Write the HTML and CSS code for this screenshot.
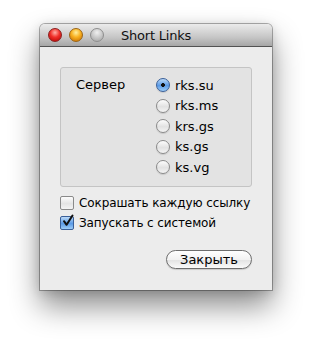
FILE: index.html
```html
<!DOCTYPE html>
<html lang="ru">

<head>
    <meta charset="UTF-8">
    <title>Short Links</title>
    <link rel="stylesheet" href="styles.css">
</head>

<body>
    <div class="window">
        <div class="titlebar">
            <div class="lights">
                <span class="light red"></span>
                <span class="light orange"></span>
                <span class="light gray"></span>
            </div>
            <div class="title">Short Links</div>
            <div></div>
        </div>

        <div class="content">
            <div class="group">
                <div class="label">Сервер</div>
                <div class="radios">
                    <div class="row"><span class="radio checked"></span>rks.su</div>
                    <div class="row"><span class="radio"></span>rks.ms</div>
                    <div class="row"><span class="radio"></span>krs.gs</div>
                    <div class="row"><span class="radio"></span>ks.gs</div>
                    <div class="row"><span class="radio"></span>ks.vg</div>
                </div>
            </div>

            <div class="checks">
                <div class="row"><span class="check"></span><span class="text">Сокрашать каждую ссылку</span></div>
                <div class="row">
                    <span class="check checked">
                        <svg width="14" height="14" viewBox="0 0 14 14">
                            <path d="M3 7.2 L5.6 10.8 L11.5 1.5" fill="none" stroke="#111" stroke-width="2"
                                stroke-linecap="round" stroke-linejoin="round" />
                        </svg>
                    </span><span class="text">Запускать с системой</span>
                </div>
            </div>

            <div class="actions">
                <button class="btn">Закрыть</button>
            </div>
        </div>
    </div>
</body>

</html>
```

FILE: styles.css
```css
html,
body {
    height: 100%;
}

body {
    margin: 0;
    min-height: 344px;
    background: #fff;
    font-family: "DejaVu Sans", "Liberation Sans", sans-serif;
    font-size: 13px;
    color: #000;
    overflow: hidden;
}

.window {
    width: 232px;
    margin: 24px 0 0 40px;
    background: #ececec;
    border-radius: 5px 5px 0 0;
    box-shadow: 0 0 0 1px rgba(0, 0, 0, 0.3), 0 16px 30px rgba(0, 0, 0, 0.45), 0 2px 12px rgba(0, 0, 0, 0.15);
}

.titlebar {
    height: 22px;
    display: grid;
    grid-template-columns: 1fr auto 1fr;
    align-items: center;
    background: linear-gradient(#ebebeb, #c6c6c6 60%, #a6a6a6);
    border-bottom: 1px solid #525252;
    border-radius: 5px 5px 0 0;
}

.lights {
    display: flex;
    gap: 7px;
    padding-left: 8px;
}

.light {
    width: 14px;
    height: 14px;
    border-radius: 50%;
    box-sizing: border-box;
}

.red {
    background: radial-gradient(circle at 50% 30%, #ffb0a8 0, #f0302a 45%, #b40000 100%);
    border: 1px solid #8a2020;
}

.orange {
    background: radial-gradient(circle at 50% 30%, #fff0a0 0, #f8b020 45%, #c46a00 100%);
    border: 1px solid #9a6414;
}

.gray {
    background: radial-gradient(circle at 50% 30%, #f0f0f0 0, #c8c8c8 50%, #a2a2a2 100%);
    border: 1px solid #8e8e8e;
}

.title {
    font-size: 13px;
    color: #111;
    padding-top: 1px;
    letter-spacing: -0.2px;
}

.content {
    padding: 20px 20px 21px;
}

.group {
    display: flex;
    background: #e3e3e3;
    border: 1px solid #c4c4c4;
    border-radius: 3px;
    padding: 7px 0 8px 15px;
}

.label {
    width: 80px;
    line-height: 20.5px;
}

.row {
    display: flex;
    align-items: center;
    height: 20.5px;
    gap: 5px;
    white-space: nowrap;
}

.radio {
    flex-shrink: 0;
    width: 14px;
    height: 14px;
    box-sizing: border-box;
    border-radius: 50%;
    border: 1px solid #8a8a8a;
    background: linear-gradient(#fdfdfd, #e2e2e2 55%, #f4f4f4);
    box-shadow: 0 1px 1px rgba(0, 0, 0, 0.12);
}

.radio.checked {
    border-color: #3a5f98;
    background: radial-gradient(circle, #111 0, #111 1.6px, transparent 2.2px),
        linear-gradient(#bcdaf8, #5a9ae6 55%, #9ecdf8);
}

.checks {
    margin-top: 6px;
}

.checks .row {
    height: 20px;
}

.checks .text {
    font-size: 12px;
    letter-spacing: -0.1px;
}

.check {
    flex-shrink: 0;
    width: 14px;
    height: 14px;
    box-sizing: border-box;
    border: 1px solid #8a8a8a;
    border-radius: 2px;
    background: linear-gradient(#fdfdfd, #e4e4e4 55%, #f4f4f4);
    position: relative;
}

.check.checked {
    border-color: #3a5f98;
    background: linear-gradient(#bcdaf8, #5a9ae6 55%, #9ecdf8);
}

.check svg {
    position: absolute;
    left: 0;
    top: -3px;
}

.actions {
    display: flex;
    justify-content: flex-end;
    margin-top: 17px;
}

.btn {
    width: 86px;
    height: 19px;
    padding: 0;
    font-family: inherit;
    font-size: 13px;
    color: #000;
    border: 1px solid #6e6e6e;
    border-radius: 10px;
    background: linear-gradient(#ffffff, #f2f2f2 50%, #e2e2e2 51%, #fafafa);
    box-shadow: 0 1px 1px rgba(0, 0, 0, 0.15);
}
```
